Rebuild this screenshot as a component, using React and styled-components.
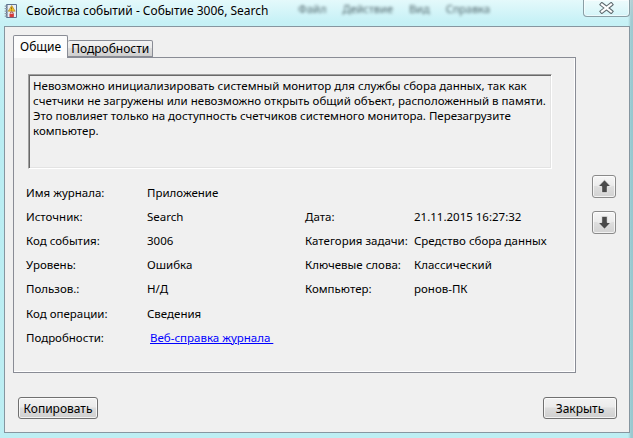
import React from 'react';
import styled, { createGlobalStyle } from 'styled-components';

const FONT = '"Noto Sans", "Liberation Sans", sans-serif';

const GlobalStyle = createGlobalStyle`
  html, body {
    margin: 0;
    padding: 0;
  }
  body {
    width: 633px;
    height: 438px;
    overflow: hidden;
    font-family: ${FONT};
    font-size: 11.5px;
    color: #000;
  }
`;

const FIELDS = [
  ['Имя журнала:', 'Приложение', null, null],
  ['Источник:', 'Search', 'Дата:', '21.11.2015 16:27:32'],
  ['Код события:', '3006', 'Категория задачи:', 'Средство сбора данных'],
  ['Уровень:', 'Ошибка', 'Ключевые слова:', 'Классический'],
  ['Пользов.:', 'Н/Д', 'Компьютер:', 'ронов-ПК'],
  ['Код операции:', 'Сведения', null, null],
];

const Window = styled.div`
  width: 633px;
  height: 438px;
  display: flex;
  flex-direction: column;
  background:
    linear-gradient(90deg, rgba(255, 255, 255, 0) 0, rgba(255, 255, 255, 0) 628px, rgba(90, 130, 140, 0.35) 631px),
    linear-gradient(180deg, #e4f9fb 0, #c6f1f6 22px, #b9edf3 120px, #bdeef3 100%);
`;

const TitleBar = styled.div`
  height: 26px;
  display: flex;
  align-items: flex-start;
  flex-shrink: 0;
`;

const TitleIcon = styled.svg`
  width: 16px;
  height: 16px;
  margin: 3px 0 0 3px;
  flex-shrink: 0;
`;

const Title = styled.div`
  flex: 0 0 272px;
  margin-left: 7px;
  line-height: 22px;
  font-size: 12px;
  color: #000;
  white-space: nowrap;
  text-shadow: 0 0 6px rgba(255, 255, 255, 0.9);
`;

const BlurMenu = styled.div`
  display: flex;
  gap: 16px;
  padding-top: 2px;
  line-height: 14px;
  font-size: 11px;
  color: #52686e;
  filter: blur(1.4px);
  white-space: nowrap;
`;

const CloseButton = styled.div`
  margin-left: auto;
  margin-right: 3px;
  width: 45px;
  height: 16px;
  border: 1px solid #8a9ea5;
  border-top: none;
  border-radius: 0 0 4px 4px;
  background: linear-gradient(180deg, rgba(255, 255, 255, 0.35), rgba(255, 255, 255, 0.1));
  box-shadow: inset 0 0 0 1px rgba(255, 255, 255, 0.55);
  display: flex;
  align-items: center;
  justify-content: center;
`;

const Client = styled.div`
  flex: 1;
  margin: 0 3px 5px 4px;
  border: 1px solid #8696a0;
  background: #f0f0f0;
  padding: 8px 12px 13px 8px;
  display: flex;
  flex-direction: column;
`;

const TopRow = styled.div`
  display: flex;
  align-items: flex-start;
`;

const TabWidget = styled.div`
  width: 563px;
  height: 338px;
  display: flex;
  flex-direction: column;
`;

const TabStrip = styled.div`
  display: flex;
  align-items: flex-end;
  height: 22px;
  position: relative;
  z-index: 1;
`;

const Tab = styled.div`
  box-sizing: border-box;
  height: ${p => (p.$active ? 23 : 17)}px;
  margin-bottom: ${p => (p.$active ? -1 : 0)}px;
  padding: ${p => (p.$active ? '0 6px 2px 6px' : '0 3px 0 3px')};
  border: 1px solid #898c95;
  border-bottom: ${p => (p.$active ? 'none' : '1px solid #898c95')};
  border-left: ${p => (p.$active ? '1px solid #898c95' : 'none')};
  border-radius: 2px 2px 0 0;
  background: ${p =>
    p.$active
      ? '#fcfcfc'
      : 'linear-gradient(180deg, #f3f3f3 0, #ebebeb 45%, #dddddd 50%, #cfcfcf 100%)'};
  display: flex;
  align-items: center;
  white-space: nowrap;
  font-size: 12px;
`;

const Panel = styled.div`
  flex: 1;
  border: 1px solid #898c95;
  box-shadow: inset -1px -1px 0 #ffffff;
  background: #f0f0f0;
  padding: 16px 0 0 12px;
  display: flex;
  flex-direction: column;
`;

const Description = styled.div`
  margin-left: 2px;
  width: 524px;
  height: 95px;
  box-sizing: border-box;
  border-top: 1px solid #a0a0a0;
  border-left: 1px solid #a0a0a0;
  border-right: 1px solid #ffffff;
  border-bottom: 1px solid #ffffff;
  box-shadow: inset 1px 1px 0 #696969, inset -1px -1px 0 #e3e3e3;
  padding: 3px 4px 0 4px;
  line-height: 15px;
  background: #f0f0f0;
`;

const FieldGrid = styled.div`
  margin-top: 11px;
  display: grid;
  grid-template-columns: 121px 158px 109px auto;
  grid-auto-rows: 24.2px;
  align-items: center;
`;

const Cell = styled.div`
  white-space: nowrap;
`;

const Link = styled.a`
  margin-left: 3px;
  color: #0000ff;
  text-decoration: underline;
  white-space: pre;
  cursor: pointer;
`;

const ArrowColumn = styled.div`
  margin: 140px 0 0 16px;
  display: flex;
  flex-direction: column;
  gap: 13px;
`;

const ArrowButton = styled.div`
  width: 24px;
  height: 23px;
  box-sizing: border-box;
  border: 1px solid #8a8a8a;
  border-radius: 3px;
  background: linear-gradient(180deg, #f6f6f6 0, #ececec 45%, #dedede 50%, #d2d2d2 100%);
  box-shadow: inset 0 0 0 1px rgba(255, 255, 255, 0.7);
  display: flex;
  align-items: center;
  justify-content: center;
`;

const ButtonRow = styled.div`
  margin-top: 24px;
  padding-left: 5px;
  display: flex;
  justify-content: space-between;
`;

const Button = styled.button`
  width: ${p => p.$width}px;
  height: 22px;
  padding: 0;
  border: 1px solid #707070;
  border-radius: 3px;
  background: linear-gradient(180deg, #f2f2f2 0, #ebebeb 45%, #dddddd 50%, #cfcfcf 100%);
  box-shadow: inset 0 0 0 1px rgba(255, 255, 255, 0.75);
  font-family: ${FONT};
  font-size: 12px;
  color: #000;
`;

const Arrow = ({ down }) => (
  <svg width="15" height="15" viewBox="0 0 14 14">
    <g transform={down ? 'rotate(180 7 7)' : undefined}>
      <path
        d="M7 0.8 L13 7 L9.6 7 L9.6 12.8 L4.4 12.8 L4.4 7 L1 7 Z"
        fill="#4a4a4a"
        stroke="#f6f6f6"
        strokeWidth="0.8"
        strokeLinejoin="round"
      />
    </g>
  </svg>
);

const EventIcon = () => (
  <TitleIcon viewBox="0 0 16 16">
    <rect x="3" y="1" width="11" height="14" rx="1" fill="#5d7290" />
    <rect x="4.5" y="2" width="8.5" height="12" fill="#e9eef4" />
    {[2.5, 5, 7.5, 10, 12.5].map(y => (
      <rect key={y} x="1.5" y={y} width="3" height="1.2" rx="0.6" fill="#8d97a3" />
    ))}
    <path d="M8.7 2.5 L12.2 8.2 L5.2 8.2 Z" fill="#f4c62a" stroke="#a37b10" strokeWidth="0.6" />
    <rect x="8.35" y="4.3" width="0.7" height="2" fill="#5a3b00" />
    <rect x="8.35" y="6.8" width="0.7" height="0.7" fill="#5a3b00" />
    <path d="M7.2 10.5 a1.5 1.5 0 0 1 3 0 v0.6" fill="none" stroke="#9a2a2a" strokeWidth="0.9" />
    <rect x="6.5" y="10.8" width="4.4" height="3.4" rx="0.6" fill="#d63b3b" />
  </TitleIcon>
);

const CloseGlyph = () => (
  <svg width="15" height="12" viewBox="0 0 15 12">
    <path d="M3 2.5 L12 9.5 M12 2.5 L3 9.5" stroke="#5f6b70" strokeWidth="4.2" strokeLinecap="square" />
    <path d="M3 2.5 L12 9.5 M12 2.5 L3 9.5" stroke="#ffffff" strokeWidth="2.2" strokeLinecap="square" />
  </svg>
);

export default function App() {
  return (
    <>
      <GlobalStyle />
      <Window>
        <TitleBar>
          <EventIcon />
          <Title>Свойства событий - Событие 3006, Search</Title>
          <BlurMenu>
            <span>Файл</span>
            <span>Действие</span>
            <span>Вид</span>
            <span>Справка</span>
          </BlurMenu>
          <CloseButton>
            <CloseGlyph />
          </CloseButton>
        </TitleBar>
        <Client>
          <TopRow>
            <TabWidget>
              <TabStrip>
                <Tab $active>Общие</Tab>
                <Tab>Подробности</Tab>
              </TabStrip>
              <Panel>
                <Description>
                  Невозможно инициализировать системный монитор для службы сбора данных, так как
                  счетчики не загружены или невозможно открыть общий объект, расположенный в памяти.
                  Это повлияет только на доступность счетчиков системного монитора. Перезагрузите
                  компьютер.
                </Description>
                <FieldGrid>
                  {FIELDS.map(([l1, v1, l2, v2]) => (
                    <React.Fragment key={l1}>
                      <Cell>{l1}</Cell>
                      <Cell>{v1}</Cell>
                      <Cell>{l2}</Cell>
                      <Cell>{v2}</Cell>
                    </React.Fragment>
                  ))}
                  <Cell>Подробности:</Cell>
                  <Cell>
                    <Link>Веб-справка журнала </Link>
                  </Cell>
                </FieldGrid>
              </Panel>
            </TabWidget>
            <ArrowColumn>
              <ArrowButton>
                <Arrow />
              </ArrowButton>
              <ArrowButton>
                <Arrow down />
              </ArrowButton>
            </ArrowColumn>
          </TopRow>
          <ButtonRow>
            <Button $width={80}>Копировать</Button>
            <Button $width={74}>Закрыть</Button>
          </ButtonRow>
        </Client>
      </Window>
    </>
  );
}
